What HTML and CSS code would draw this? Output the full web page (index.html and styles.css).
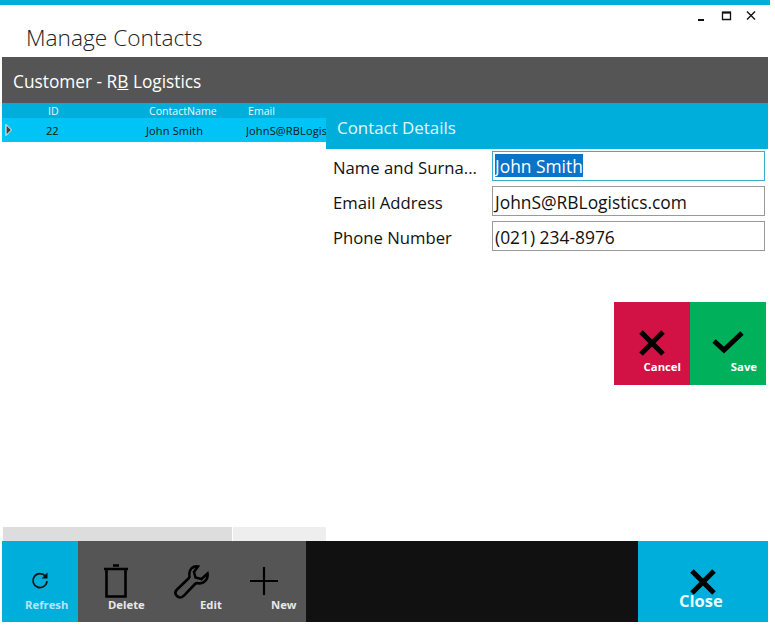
FILE: index.html
```html
<!DOCTYPE html>
<html>
<head>
<meta charset="utf-8">
<title>Manage Contacts</title>
<link rel="stylesheet" href="styles.css">
</head>
<body>
<div class="accent"></div>
<header class="titlebar">
  <h1 class="title">Manage Contacts</h1>
  <div class="winctl">
    <svg width="12" height="12" viewBox="0 0 12 12"><rect x="1" y="9" width="6" height="2" fill="#111"/></svg>
    <svg width="12" height="12" viewBox="0 0 12 12"><path d="M1.500 2.500h8v7h-8z" fill="none" stroke="#111" stroke-width="1.300"/><path d="M1 2.500h9" stroke="#111" stroke-width="2"/></svg>
    <svg width="12" height="12" viewBox="0 0 12 12"><path d="M2 1.500l8 8M10 1.500l-8 8" stroke="#111" stroke-width="1.400"/></svg>
  </div>
</header>
<div class="customer">Customer - R<u>B</u> Logistics</div>
<main class="content">
  <section class="list">
    <div class="grid-head">
      <span class="c-id">ID</span><span class="c-name">ContactName</span><span class="c-mail">Email</span>
    </div>
    <div class="grid-row">
      <svg class="row-arrow" width="8" height="14" viewBox="0 0 8 14"><path d="M1 1.500L6.500 7 1 12.500z" fill="#444" stroke="#fff" stroke-width="1"/></svg>
      <span class="r-id">22</span><span class="r-name">John Smith</span><span class="r-mail">JohnS@RBLogistics.com</span>
    </div>
    <div class="hscroll"><div class="thumb"></div></div>
  </section>
  <section class="details">
    <h2 class="details-head">Contact Details</h2>
    <div class="form">
      <label class="lbl">Name and Surna...</label>
      <div class="field focus"><span class="sel">John Smith</span></div>
      <label class="lbl">Email Address</label>
      <div class="field">JohnS@RBLogistics.com</div>
      <label class="lbl">Phone Number</label>
      <div class="field">(021) 234-8976</div>
    </div>
    <div class="actions">
      <button class="act cancel">
        <svg width="28" height="28" viewBox="0 0 28 28"><path d="M3 3l22 22M25 3L3 25" stroke="#000" stroke-width="5"/></svg>
        <span>Cancel</span>
      </button>
      <button class="act save">
        <svg width="32" height="24" viewBox="0 0 32 24"><path d="M2 11l10 9L30 3" fill="none" stroke="#000" stroke-width="5"/></svg>
        <span>Save</span>
      </button>
    </div>
  </section>
</main>
<footer class="toolbar">
  <button class="tool refresh">
    <svg width="20" height="20" viewBox="0 0 20 20"><path d="M15.500 6.200A7 7 0 1 0 17 11" fill="none" stroke="#111" stroke-width="1.700"/><path d="M17.500 2.500v6h-6z" fill="#111"/></svg>
    <span>Refresh</span>
  </button>
  <div class="tools-dark">
    <button class="tool del">
      <svg width="24" height="34" viewBox="0 0 24 34"><path d="M0 5h24M9 1.500h6M2.500 5v27.500h19V5" fill="none" stroke="#000" stroke-width="2.600"/></svg>
      <span>Delete</span>
    </button>
    <button class="tool edit">
      <svg width="36" height="36" viewBox="0 0 36 36"><path d="M24 2.500c-5-1-9.500 3-8.500 9 .2 1 0 2-1 3L3 25.500c-2.500 2.500-1.500 5 0 6.500s4.500 2.500 7-.5L21 20c1-1 2-1 3-.8 6 1 10.500-4 9.500-9.700l-6 5.500-6-1.500-1.500-5.500z" fill="none" stroke="#000" stroke-width="2.600"/></svg>
      <span>Edit</span>
    </button>
    <button class="tool new">
      <svg width="28" height="28" viewBox="0 0 28 28"><path d="M14 0v28M0 14h28" stroke="#000" stroke-width="2.200"/></svg>
      <span>New</span>
    </button>
  </div>
  <div class="spacer"></div>
  <button class="tool close">
    <svg width="28" height="28" viewBox="0 0 28 28"><path d="M3 3l22 22M25 3L3 25" stroke="#000" stroke-width="5"/></svg>
    <span>Close</span>
  </button>
</footer>
</body>
</html>
```
FILE: styles.css
```css
* { box-sizing: border-box; }
html, body { margin: 0; padding: 0; background: #fff; }
body { width: 775px; height: 630px; overflow: hidden; font-family: "Open Sans", "Noto Sans", sans-serif; color: #111; }
.accent { height: 5px; width: 770px; background: #00aedb; }
.titlebar { height: 52px; width: 768px; display: flex; justify-content: space-between; }
.title { margin: 0; padding: 16px 0 0 26px; font-size: 22.700px; line-height: 34px; font-weight: 300; color: #222; }
.winctl { display: flex; gap: 12px; padding: 5px 11px 0 0; height: 20px; }
.customer { margin-left: 2px; width: 766px; height: 46px; background: #555; color: #fff; font-size: 17.300px; line-height: 50px; padding-left: 11px; }
.content { display: flex; margin-left: 2px; width: 766px; height: 438px; }
.list { width: 324px; display: flex; flex-direction: column; position: relative; }
.grid-head { height: 15px; background: #00aedb; color: #e8f8fc; font-size: 10.600px; line-height: 16px; position: relative; }
.grid-row { height: 24px; background: #00c4f5; color: #111; font-size: 11px; line-height: 26px; position: relative; white-space: nowrap; overflow: hidden; }
.grid-head span, .grid-row span { position: absolute; top: 0; }
.c-id { left: 46px; } .c-name { left: 147px; } .c-mail { left: 246px; }
.r-id { left: 44px; } .r-name { left: 144px; letter-spacing: .15px; } .r-mail { left: 244px; width: 80px; overflow: hidden; letter-spacing: .15px; }
.row-arrow { position: absolute; left: 3px; top: 5px; }
.hscroll { margin-top: auto; height: 14px; background: #eee; margin-left: 1px; }
.thumb { width: 230px; height: 100%; background: #ddd; border-right: 1px solid #fff; }
.details { width: 442px; }
.details-head { margin: 0; height: 46px; background: #00aedb; color: #e4f7fc; font-size: 16.900px; font-weight: 400; line-height: 50px; padding-left: 11px; }
.form { display: grid; grid-template-columns: 166px 273px; row-gap: 5px; padding: 2px 0 0 0; align-items: center; }
.lbl { font-size: 16.700px; padding: 2px 0 0 7px; color: #111; white-space: nowrap; }
.field { height: 30px; border: 1px solid #999; font-size: 17.400px; line-height: 30px; padding-left: 2px; color: #111; }
.field.focus { border-color: #3aaecb; }
.sel { background: #0a74c9; color: #fff; display: inline-block; height: 23px; line-height: 25px; vertical-align: top; margin-top: 2px; }
.actions { display: flex; justify-content: flex-end; padding-right: 2px; margin-top: 51px; }
button { border: 0; padding: 0; margin: 0; font-family: inherit; position: relative; }
.act { width: 76px; height: 83px; color: #fff; }
.act svg { position: absolute; }
.act span { position: absolute; font-size: 11.300px; font-weight: 700; top: 57px; right: 9px; }
.cancel { background: #d21145; }
.cancel svg { left: 24px; top: 27px; }
.save { background: #00b05b; }
.save svg { left: 22px; top: 28px; }
.save span { right: 9px; }
.toolbar { display: flex; margin-left: 2px; width: 766px; height: 81px; background: #111; }
.tool { width: 76px; height: 81px; color: #e8e8e8; background: transparent; }
.tool svg { position: absolute; }
.tool span { position: absolute; font-size: 11.300px; font-weight: 700; top: 56px; }
.refresh { background: #00aedb; }
.refresh svg { left: 28px; top: 29px; }
.refresh span { left: 23px; color: #b5e6f3; }
.tools-dark { display: flex; width: 228px; background: #555; }
.del svg { left: 26px; top: 23px; }
.del span { left: 30px; }
.edit svg { left: 20px; top: 23px; }
.edit span { left: 46px; }
.new svg { left: 20px; top: 26px; }
.new span { left: 41px; }
.spacer { width: 332px; }
.close { width: 130px; background: #00aedb; }
.close svg { left: 51px; top: 27px; }
.close span { left: 41px; top: 48px; font-size: 16.500px; color: #eafaff; }
```
